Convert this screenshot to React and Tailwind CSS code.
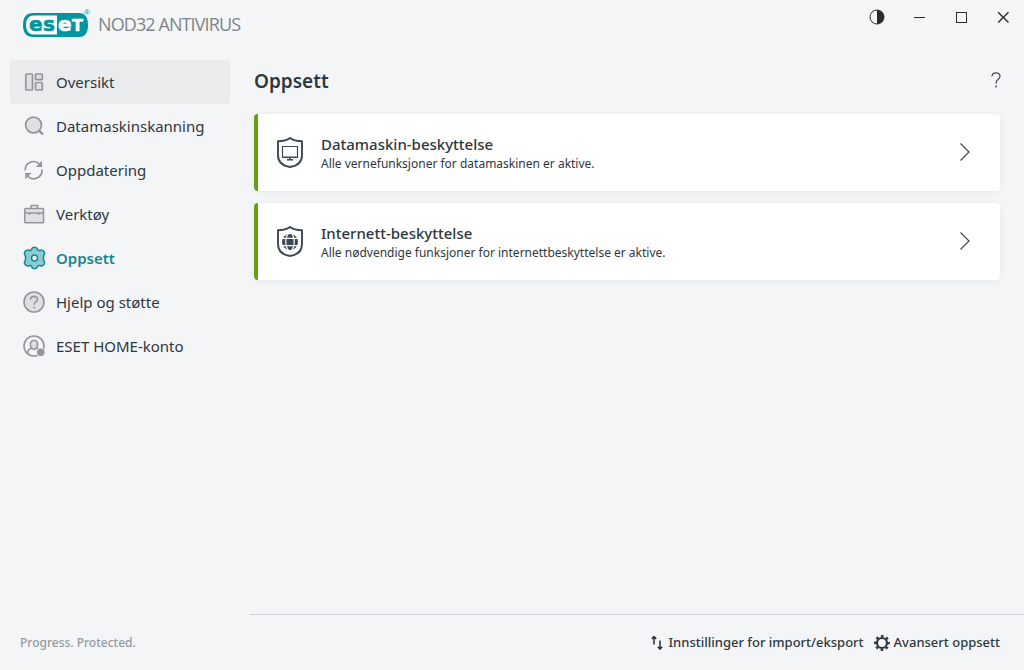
import { useState } from 'react';

const navItems = [
  { id: 'overview', label: 'Oversikt', Icon: OverviewIcon },
  { id: 'scan', label: 'Datamaskinskanning', Icon: ScanIcon },
  { id: 'update', label: 'Oppdatering', Icon: UpdateIcon },
  { id: 'tools', label: 'Verktøy', Icon: ToolsIcon },
  { id: 'setup', label: 'Oppsett', Icon: SetupIcon },
  { id: 'help', label: 'Hjelp og støtte', Icon: HelpIcon },
  { id: 'account', label: 'ESET HOME-konto', Icon: AccountIcon },
];

const cards = [
  {
    title: 'Datamaskin-beskyttelse',
    text: 'Alle vernefunksjoner for datamaskinen er aktive.',
    Icon: MonitorShield,
  },
  {
    title: 'Internett-beskyttelse',
    text: 'Alle nødvendige funksjoner for internettbeskyttelse er aktive.',
    Icon: GlobeShield,
  },
];

function OverviewIcon() {
  return (
    <svg width="24" height="24" viewBox="0 0 24 24" fill="#dfe0e2" stroke="#939699" strokeWidth="1.7">
      <rect x="3.8" y="4" width="6.7" height="16" rx=".8" />
      <rect x="13.5" y="4" width="6.8" height="5.7" rx=".8" />
      <rect x="13.5" y="12.5" width="6.8" height="7.5" rx=".8" />
    </svg>
  );
}

function ScanIcon() {
  return (
    <svg width="24" height="24" viewBox="0 0 24 24" fill="#dfe0e2" stroke="#939699" strokeWidth="1.7">
      <circle cx="11.5" cy="11" r="7.9" />
      <path d="M17 16.5l4 4" strokeWidth="2.4" />
    </svg>
  );
}

function UpdateIcon() {
  return (
    <svg width="24" height="24" viewBox="0 0 24 24" fill="none" stroke="#939699" strokeWidth="1.7">
      <path d="M3.2 12.2A8.3 8.3 0 0 1 17.5 6.2M19.9 11.5A8.3 8.3 0 0 1 5.5 18" />
      <path d="M20 2.8v6.2h-6.2zM3.3 21.2V15h6.2z" fill="#939699" stroke="none" />
    </svg>
  );
}

function ToolsIcon() {
  return (
    <svg width="24" height="24" viewBox="0 0 24 24" fill="#dfe0e2" stroke="#939699" strokeWidth="1.5">
      <path d="M9 6.5v-3h6.5v3" fill="none" />
      <rect x="2.7" y="6.5" width="18.8" height="14.3" rx="1" />
      <path d="M3 11h18.5M7.5 11v2M16.5 11v2" />
    </svg>
  );
}

function SetupIcon() {
  return (
    <svg width="24" height="24" viewBox="0 0 24 24" fill="#8acdd5" stroke="#168890" strokeWidth="1.5" strokeLinejoin="round">
      <path d="M9.6 3.3C10.2 .7 14.8 .7 15.4 3.3C15.8 4.6 17 4.8 18.300 4.200C21 3.200 23.700 7 22 9C21.200 10.300 21.200 13.700 22 15C23.700 17 21 20.800 18.300 19.800C17 19.200 15.800 19.400 15.400 20.700C14.800 23.300 10.200 23.300 9.600 20.700C9.200 19.400 8 19.200 6.700 19.800C4 20.800 1.300 17 3 15C3.800 13.700 3.800 10.300 3 9C1.300 7 4 3.200 6.700 4.200C8 4.800 9.200 4.600 9.600 3.300Z" />
      <circle cx="12.5" cy="12" r="3" fill="#f4f5f7" />
    </svg>
  );
}

function HelpIcon() {
  return (
    <svg width="24" height="24" viewBox="0 0 24 24" fill="none" stroke="#939699" strokeWidth="1.6">
      <circle cx="12" cy="12" r="10" fill="#dfe0e2" />
      <path d="M8.5 9.8C8.6 5.2 15.8 5.4 15.5 9.4C15.3 12 12.2 11.4 12.2 14.7" />
      <circle cx="12.2" cy="17.5" r="1.1" fill="#939699" stroke="none" />
    </svg>
  );
}

function AccountIcon() {
  return (
    <svg width="24" height="24" viewBox="0 0 24 24" fill="none" stroke="#939699" strokeWidth="1.6">
      <circle cx="12" cy="12" r="10" />
      <path d="M5.5 19c.4-3.1 2.100-4.200 4.100-4.900M18.500 19c-.4-3.100-2.100-4.200-4.100-4.900" />
      <path d="M12 6.5c2.300 0 3.600 1.600 3.600 3.900S14 15.200 12 15.200s-3.600-2.500-3.600-4.800S9.700 6.500 12 6.500z" fill="#dfe0e2" />
      <circle cx="18.8" cy="18.3" r="4.2" fill="#939699" stroke="#f4f5f7" strokeWidth=".8" />
    </svg>
  );
}

function Shield({ children }) {
  return (
    <svg width="28" height="32" viewBox="0 -1 28 32" fill="none" stroke="#3c4855" strokeWidth="1.9" strokeLinejoin="round">
      <path d="M14 1C10.5 3.700 6 4.200 2 4.200V18c0 7 5 11 12 12C21 29 26 25 26 18V4.200C22 4.200 17.500 3.700 14 1z" />
      {children}
    </svg>
  );
}

function MonitorShield() {
  return (
    <Shield>
      <rect x="6.5" y="9.5" width="15" height="11" strokeWidth="1.2" />
      <path d="M6 20.3h16M11 22.700h6M14 20v3" strokeWidth="1.6" />
    </Shield>
  );
}

function GlobeShield() {
  return (
    <Shield>
      <circle cx="14" cy="16" r="8" fill="#3c4855" stroke="none" />
      <path d="M5 12.3h18M5 19.7h18" stroke="#fff" strokeWidth="1.2" />
      <ellipse cx="14" cy="16" rx="4.2" ry="9" stroke="#fff" strokeWidth="1.2" />
    </Shield>
  );
}

function EsetLogo() {
  return (
    <svg width="68" height="32" viewBox="0 0 68 32" role="img" aria-label="ESET" className="shrink-0">
      <path d="M11 5H57Q66 5 66 17T57 29H11Q1 29 1 17T11 5z" fill="#0096a1" />
      <path d="M35 7.5H12Q4 7.5 4 17t8 9.5h23z" fill="#fff" />
      <g fontFamily="'DejaVu Sans', sans-serif" fontWeight="700" fontSize="20" strokeWidth=".6">
        <g fill="#0096a1" stroke="#0096a1">
          <text x="7" y="23">e</text>
          <text x="21" y="23">s</text>
        </g>
        <g fill="#fff" stroke="#fff">
          <text x="36" y="23">e</text>
          <text x="50" y="23" fontSize="16">T</text>
        </g>
      </g>
      <text x="62" y="7" fontFamily="'Liberation Sans', sans-serif" fontSize="8" fill="#0096a1">®</text>
    </svg>
  );
}

function WindowControls() {
  return (
    <div className="flex text-[#2b2b2b]">
      <button type="button" aria-label="Kontrast" className="flex h-[34px] w-[42px] items-center justify-center">
        <svg width="16" height="16" viewBox="0 0 16 16">
          <circle cx="8" cy="8" r="7" fill="none" stroke="currentColor" />
          <path d="M8 1a7 7 0 0 1 0 14z" fill="currentColor" />
        </svg>
      </button>
      <button type="button" aria-label="Minimer" className="flex h-[34px] w-[42px] items-center justify-center">
        <svg width="12" height="12" viewBox="0 0 12 12" stroke="currentColor">
          <path d="M1 6.5h11" />
        </svg>
      </button>
      <button type="button" aria-label="Maksimer" className="flex h-[34px] w-[42px] items-center justify-center">
        <svg width="12" height="12" viewBox="0 0 12 12" fill="none" stroke="currentColor">
          <rect x="1.5" y="1.5" width="10" height="10" />
        </svg>
      </button>
      <button type="button" aria-label="Lukk" className="flex h-[34px] w-[42px] items-center justify-center">
        <svg width="12" height="12" viewBox="0 0 12 12" stroke="currentColor" strokeWidth="1.4">
          <path d="M1.2 1.2l10.3 10.3M11.5 1.2 1.2 11.5" />
        </svg>
      </button>
    </div>
  );
}

export default function App() {
  const [hovered, setHovered] = useState('overview');
  const [active, setActive] = useState('setup');

  return (
    <div className="flex min-h-screen flex-col bg-[#f4f5f7] font-['Noto_Sans',sans-serif] text-[#2f3740]">
      <header className="flex h-[50px] items-start justify-between pl-[22px]">
        <div className="flex items-center gap-2 pt-2">
          <EsetLogo />
          <span className="font-['Open_Sans',sans-serif] text-lg leading-8 tracking-tighter text-[#7d858a]">
            NOD32 ANTIVIRUS
          </span>
        </div>
        <WindowControls />
      </header>

      <div className="flex flex-1">
        <aside className="flex w-[250px] shrink-0 flex-col pt-[10px]">
          <nav className="flex flex-1 flex-col pr-5 pl-[10px]">
            {navItems.map(({ id, label, Icon }) => (
              <button
                key={id}
                type="button"
                onClick={() => setActive(id)}
                onMouseEnter={() => setHovered(id)}
                className={`flex h-11 items-center gap-[10px] rounded px-3 text-left text-[15px] ${
                  hovered === id ? 'bg-[#eaebed]' : ''
                } ${active === id ? 'font-semibold text-[#168890]' : ''}`}
              >
                <Icon />
                {label}
              </button>
            ))}
          </nav>
          <p className="flex h-14 items-center pt-[2px] pl-5 text-xs font-medium text-[#929ba1]">
            Progress. Protected.
          </p>
        </aside>

        <div className="flex min-w-0 flex-1 flex-col">
          <main className="flex-1 pt-4 pr-6 pl-1">
            <div className="mb-4 flex h-8 items-start justify-between">
              <h1 className="text-[19px] leading-[30px] font-semibold">Oppsett</h1>
              <button type="button" aria-label="Hjelp" className="flex h-7 w-2 items-center justify-center">
                <svg width="10" height="16" viewBox="0 0 10 16" className="shrink-0" fill="none" stroke="#3c4855" strokeWidth="1.2">
                  <path d="M1 4.5C1-.3 9-.3 9 4.3C9 7.6 5 7 5 11.5" />
                  <circle cx="5" cy="14.5" r=".9" fill="#3c4855" stroke="none" />
                </svg>
              </button>
            </div>

            <div className="flex flex-col gap-3">
              {cards.map(({ title, text, Icon }) => (
                <button
                  key={title}
                  type="button"
                  className="flex h-[77px] items-center rounded border-l-4 border-[#64a012] bg-white pr-[30px] pb-px pl-[18px] text-left shadow-[0_1px_6px_rgba(0,0,0,0.06)]"
                >
                  <Icon />
                  <span className="ml-[17px] flex flex-1 flex-col pt-1">
                    <span className="text-[15px] leading-5 font-medium">{title}</span>
                    <span className="text-xs leading-5">{text}</span>
                  </span>
                  <svg width="11" height="18" viewBox="0 0 11 18" fill="none" stroke="#3c4855" strokeWidth="1.2">
                    <path d="M1.5 .5 10 9 1.5 17.5" />
                  </svg>
                </button>
              ))}
            </div>
          </main>

          <footer className="flex h-14 items-center justify-end gap-[10px] border-t border-[#d1d4d7] pr-6 text-[13px] font-medium">
            <button type="button" className="flex items-center gap-[6px]">
              <svg width="12" height="16" viewBox="0 0 12 16" fill="none" stroke="currentColor" strokeWidth="1.6">
                <path d="M3 9.5V2M.8 3.9 3 1.7l2.2 2.2M9 5.5V14M6.8 11.8 9 14l2.200-2.200" />
              </svg>
              Innstillinger for import/eksport
            </button>
            <button type="button" className="flex items-center gap-1">
              <svg width="16" height="16" viewBox="0 0 16 16" fill="none" stroke="currentColor">
                <circle cx="8" cy="8" r="5" strokeWidth="2.2" />
                <circle cx="8" cy="8" r="6.8" strokeWidth="2.2" strokeDasharray="2.67 2.67" strokeDashoffset="1.33" />
              </svg>
              Avansert oppsett
            </button>
          </footer>
        </div>
      </div>
    </div>
  );
}
